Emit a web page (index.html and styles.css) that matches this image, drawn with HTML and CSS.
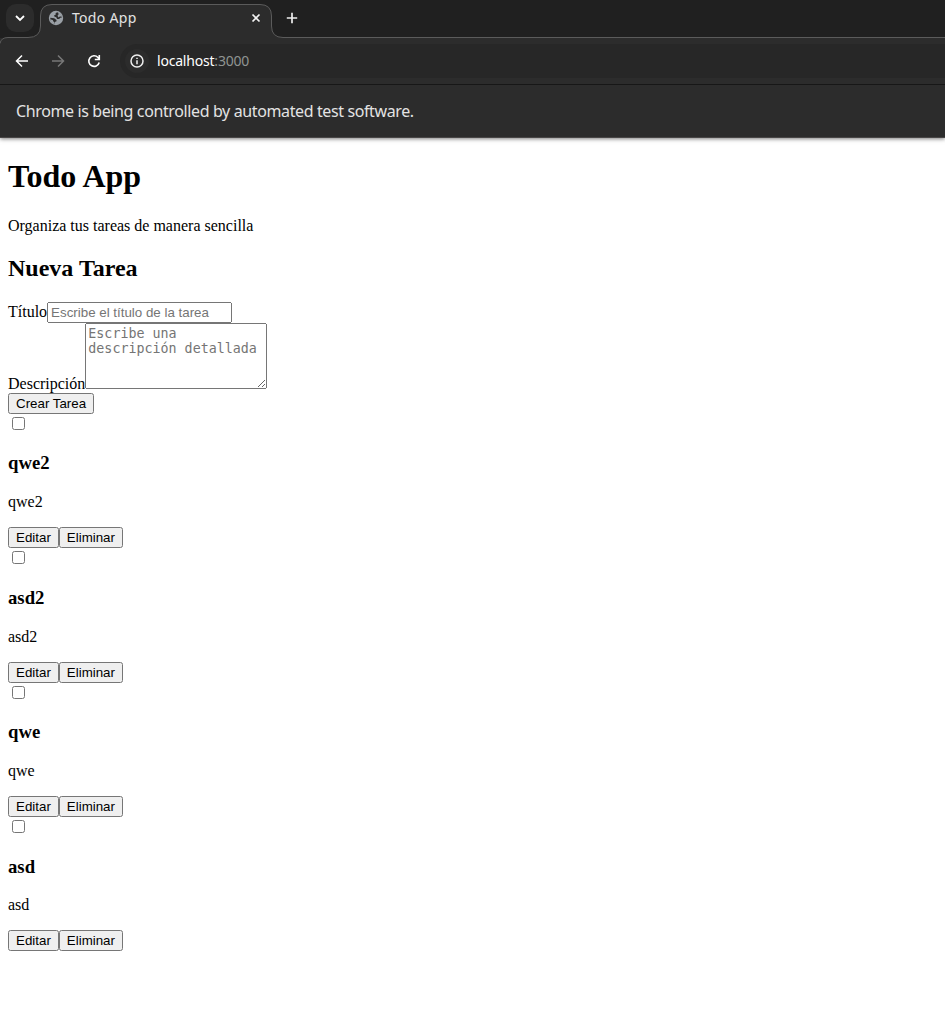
FILE: index.html
```html
<!DOCTYPE html>
<html lang="es">
<head>
<meta charset="utf-8">
<title>Todo App</title>
<link rel="stylesheet" href="styles.css">
</head>
<body>
<header class="browser">
  <svg class="frame" width="945" height="48" viewBox="0 0 945 48" fill="none">
    <path d="M0 48V43.5Q1 37.5 8 37.5H28Q40.500 37.500 40.500 26V16Q40.500 4.500 52 4.500H260Q271.500 4.500 271.500 16V26Q271.500 37.500 283 37.500H945V48Z" fill="#2c2c2c"/>
    <path d="M0 43.500Q1 37.500 8 37.500H28Q40.500 37.500 40.500 26V16Q40.500 4.500 52 4.500H260Q271.500 4.500 271.500 16V26Q271.500 37.500 283 37.500H945" stroke="#5b5b5b"/>
  </svg>
  <div class="tabs">
    <span class="tab-search"><svg width="28" height="28" fill="none" stroke="#fff" stroke-width="1.800"><path d="M10 12L14 16L18 12"/></svg></span>
    <div class="tab">
      <svg class="globe" width="16" height="16" viewBox="0 0 16 16"><circle cx="8" cy="8" r="7.200" fill="#9aa0a6"/><path fill="#2c2c2c" d="M9 2.300L7.500 3.500L7.600 5H6.300V6.500L8.200 7.200L9.200 9H11.200L12.200 7.700H13.700L13.300 5.700L11.700 3.300ZM2.300 7.800L6.200 8.200L8.500 10V11.300L6.900 12V13.700L4.200 12.500L2.400 10Z"/><path fill="#9aa0a6" d="M10 2L12.500 3.500L13.900 6.500H11.800L10.500 7.500L9.500 5.800L10.600 4.300ZM2 9.200L4.700 10L5.600 11.700L6.600 12.500V14L3.500 12.500Z"/></svg>
      <span class="tab-title">Todo App</span>
      <svg class="close" width="10" height="10" stroke="#f4f4f4" stroke-width="1.700"><path d="M1.500 1.500L8.500 8.500M8.500 1.500L1.500 8.500"/></svg>
    </div>
    <svg class="plus" width="12" height="12" stroke="#eee" stroke-width="1.700"><path d="M6 .8V11.200M.8 6H11.200"/></svg>
  </div>
  <div class="toolbar">
    <svg class="nav" width="16" height="16" fill="none" stroke="#fff" stroke-width="1.500"><path d="M14 8H3M8 2.500L2.500 8L8 13.500"/></svg>
    <svg class="nav" width="16" height="16" fill="none" stroke="#777" stroke-width="1.500"><path d="M2 8H13M8 2.500L13.500 8L8 13.500"/></svg>
    <svg class="nav" width="16" height="16" fill="none" stroke="#fff" stroke-width="1.600"><path d="M13.200 9.500A5.300 5.300 0 1 1 12 4.500L13.200 6M13.300 2V6.500H8.800"/></svg>
    <div class="address">
      <span class="info"><svg width="14" height="14" fill="none" stroke="#eee" stroke-width="1.500"><circle cx="7" cy="7" r="6"/><path d="M7 6.200V10.300M7 3.700V5.100"/></svg></span>
      <span class="url">localhost<span class="port">:3000</span></span>
    </div>
  </div>
  <div class="notice"><span>Chrome is being controlled by automated test software.</span></div>
</header>
<main class="page">
  <h1>Todo App</h1>
  <p>Organiza tus tareas de manera sencilla</p>
  <h2>Nueva Tarea</h2>
  <form>
    <div><label for="title">Título</label><input class="title-input" id="title" type="text" placeholder="Escribe el título de la tarea"></div>
    <div><label for="desc">Descripción</label><textarea class="desc-input" id="desc" placeholder="Escribe una descripción detallada"></textarea></div>
    <button type="button">Crear Tarea</button>
  </form>
  <section class="task"><input type="checkbox"><div><h3>qwe2</h3><p>qwe2</p></div><div><button>Editar</button><button>Eliminar</button></div></section>
  <section class="task"><input type="checkbox"><div><h3>asd2</h3><p>asd2</p></div><div><button>Editar</button><button>Eliminar</button></div></section>
  <section class="task"><input type="checkbox"><div><h3>qwe</h3><p>qwe</p></div><div><button>Editar</button><button>Eliminar</button></div></section>
  <section class="task"><input type="checkbox"><div><h3>asd</h3><p>asd</p></div><div><button>Editar</button><button>Eliminar</button></div></section>
</main>
</body>
</html>
```
FILE: styles.css
```css
html, body { background: #fff; }
body { margin: 0; font-family: "Liberation Serif", serif; font-size: 16px; color: #000; }
.browser { position: relative; height: 138px; background: #2c2c2c; color: #e3e3e3; font-family: "Noto Sans", sans-serif; box-shadow: 0 1px 4px rgba(0,0,0,.5); overflow: visible; }
.frame { position: absolute; left: 0; top: 0; }
.tabs { height: 38px; display: flex; background: #202020; }
.tabs > *, .tab > * { position: relative; }
.tab-search { width: 28px; height: 28px; margin: 4px 6px; border-radius: 10px; background: #2c2c2c; }
.tab { width: 232px; height: 36px; display: flex; align-items: center; box-sizing: border-box; padding: 0 11px 0 8px; }
.tab-title { margin-left: 8px; padding-bottom: 2px; font-size: 14px; letter-spacing: .3px; flex: 1; }
.plus { margin: 12px 0 0 14px; }
.toolbar { height: 46px; display: flex; align-items: center; padding-left: 14px; border-bottom: 1px solid #171717; box-sizing: content-box; }
.nav { position: relative; margin-right: 20px; flex: none; }
.address { position: relative; flex: 1; height: 34px; margin-left: -2px; border-radius: 17px 0 0 17px; background: #272727; display: flex; align-items: center; }
.info { width: 24px; height: 24px; margin-left: 5px; display: flex; align-items: center; justify-content: center; border-radius: 50%; background: #2c2c2c; }
.url { margin-left: 8px; padding-bottom: 2px; font-size: 14px; color: #fff; letter-spacing: -.2px; }
.port { color: #8f9492; }
.notice { height: 53px; display: flex; align-items: center; padding-left: 16px; box-sizing: border-box; font-size: 16px; letter-spacing: -.38px; border-bottom: 1px solid #494747; }
.page { margin: 0 8px; padding-top: .1px; }
h1 { margin: 20px 0 21.8px; font-size: 32px; }
.title-input { width: 185px; height: 21px; box-sizing: border-box; font: 13.333px "Liberation Sans", sans-serif; }
.desc-input { width: 182px; height: 66px; box-sizing: border-box; font: 13.333px "DejaVu Sans Mono", monospace; }
button { height: 21px; font: 13.333px "Liberation Sans", sans-serif; }
```
